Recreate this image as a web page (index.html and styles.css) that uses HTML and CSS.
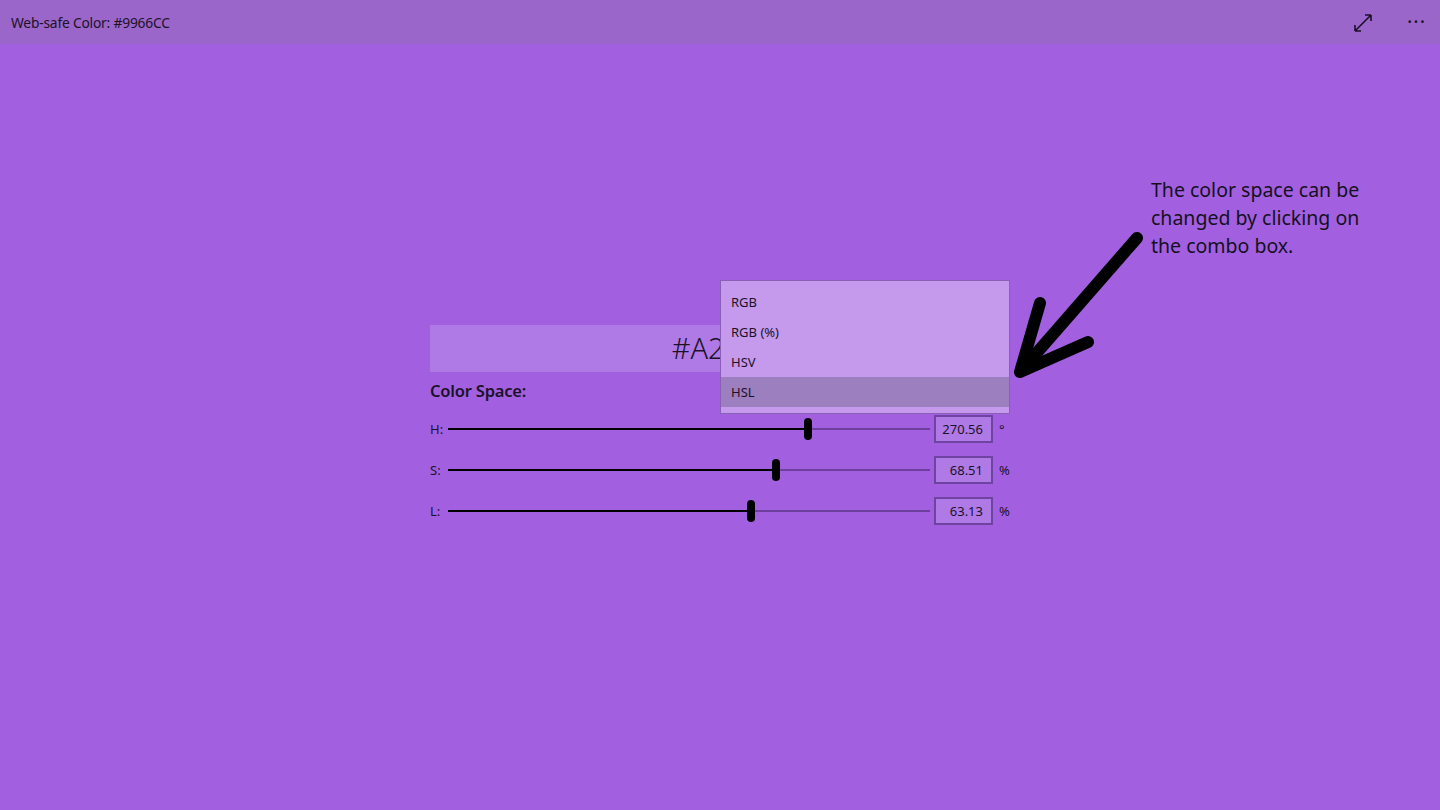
FILE: index.html
```html
<!DOCTYPE html>
<html lang="en">
<head>
    <meta charset="UTF-8">
    <title>Web-safe Color: #9966CC</title>
    <link rel="stylesheet" href="styles.css">
</head>
<body>
    <div id="titlebar">
        <span class="title">Web-safe Color: #9966CC</span>
        <div class="tools">
            <svg class="expand" width="20" height="20" viewBox="0 0 20 20">
                <path d="M2 18 L18 2 M2 18 L2 12 M2 18 L8 18 M18 2 L12 2 M18 2 L18 8" fill="none" stroke="#1a1026" stroke-width="1.6"/>
            </svg>
            <span class="more">&middot;&middot;&middot;</span>
        </div>
    </div>

    <div id="main">
        <div id="panel">
            <div class="hex">#A261E1</div>
            <div class="space-label">Color Space:</div>

            <div class="row">
                <span class="name">H:</span>
                <div class="slider">
                    <div class="fill" style="width:74.7%"></div>
                    <div class="thumb" style="left:74.7%"></div>
                </div>
                <div class="value">270.56</div>
                <span class="unit">&deg;</span>
            </div>
            <div class="row">
                <span class="name">S:</span>
                <div class="slider">
                    <div class="fill" style="width:68%"></div>
                    <div class="thumb" style="left:68%"></div>
                </div>
                <div class="value">68.51</div>
                <span class="unit">%</span>
            </div>
            <div class="row">
                <span class="name">L:</span>
                <div class="slider">
                    <div class="fill" style="width:62.9%"></div>
                    <div class="thumb" style="left:62.9%"></div>
                </div>
                <div class="value">63.13</div>
                <span class="unit">%</span>
            </div>

            <!-- open combo box -->
            <ul id="dropdown">
                <li>RGB</li>
                <li>RGB (%)</li>
                <li>HSV</li>
                <li class="on">HSL</li>
            </ul>
        </div>

        <p id="note">The color space can be changed by clicking on the combo box.</p>
        <svg id="arrow" width="160" height="160" viewBox="0 0 160 160">
            <path d="M137 8 L20 142 M20 142 L40 73 M20 142 L88 112" fill="none" stroke="#000" stroke-width="12" stroke-linecap="round" stroke-linejoin="round"/>
        </svg>
    </div>
</body>
</html>
```

FILE: styles.css
```css
*{
    margin:0;
    padding:0;
}

body{
    width:1440px;
    height:810px;
    overflow:hidden;
    background:#A260E0;
    font-family:"Noto Sans","Open Sans",sans-serif;
    color:#1c1228;
}

#titlebar{
    height:44px;
    background:#9A66CA;
    display:flex;
    align-items:center;
    justify-content:space-between;
    padding:0 14px 0 11px;
}
#titlebar .title{
    font-size:13.8px;
    letter-spacing:-0.2px;
}
#titlebar .tools{
    display:flex;
    align-items:center;
    gap:34px;
}
#titlebar .expand{
    margin-top:2px;
}
#titlebar .more{
    font-size:20px;
    letter-spacing:1px;
    line-height:20px;
}

#main{
    position:relative;
    height:766px;
    padding-top:281px;
    padding-left:430px;
    box-sizing:border-box;
}

#panel{
    position:relative;
    width:580px;
}

.hex{
    height:47px;
    padding-left:22px;
    background:#B07AE6;
    font-size:29px;
    font-weight:300;
    line-height:46px;
    text-align:center;
}
.space-label{
    height:36px;
    line-height:38px;
    font-size:16.5px;
    font-weight:600;
    letter-spacing:-0.2px;
}

.row{
    height:41px;
    display:flex;
    align-items:center;
}
.row .name{
    width:18px;
    font-size:13px;
}
.slider{
    position:relative;
    width:482px;
    height:2px;
    background:#6F3F9F;
}
.slider .fill{
    height:2px;
    background:#000;
}
.slider .thumb{
    position:absolute;
    top:-10px;
    width:8px;
    height:22px;
    margin-left:-4px;
    border-radius:4px;
    background:#000;
}
.value{
    margin-left:4px;
    width:47px;
    height:24px;
    padding-right:8px;
    border:2px solid #6E43A2;
    background:#AF79E6;
    font-size:13px;
    line-height:24px;
    text-align:right;
}
.unit{
    margin-left:6px;
    font-size:13px;
}

#dropdown{
    position:absolute;
    left:290px;
    top:-45px;
    width:288px;
    list-style:none;
    background:#C59AEC;
    border:1px solid #8A5FB6;
    padding:6px 0;
}
#dropdown li{
    height:30px;
    line-height:30px;
    padding-left:10px;
    font-size:13px;
}
#dropdown li.on{
    background:#9C7FBE;
}

#note{
    position:absolute;
    left:1151px;
    top:132px;
    width:228px;
    font-size:19.5px;
    line-height:28px;
    color:#15101d;
}
#arrow{
    position:absolute;
    left:1000px;
    top:186px;
}
```
